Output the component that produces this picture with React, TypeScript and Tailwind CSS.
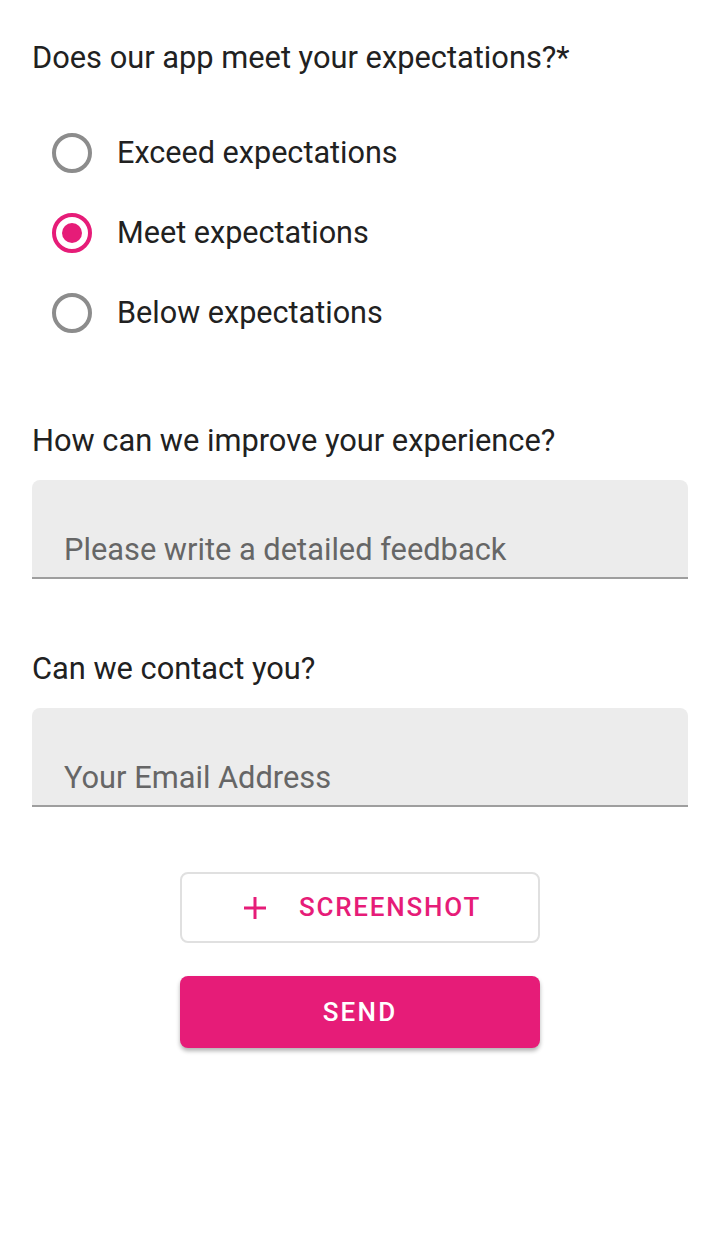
import React from "react";

const font = { fontFamily: "Roboto, 'Noto Sans', sans-serif" };

function Radio({ checked, label }: { checked?: boolean; label: string }) {
  return (
    <div className="flex items-center h-[80px] pl-[20px]">
      <div
        className={
          "w-[40px] h-[40px] rounded-full border-[4px] flex items-center justify-center " +
          (checked ? "border-[#e61c78]" : "border-[#8c8c8c]")
        }
      >
        {checked && <div className="w-[20px] h-[20px] rounded-full bg-[#e61c78]" />}
      </div>
      <span className="ml-[25px] text-[30.6px] text-[#212121]">{label}</span>
    </div>
  );
}

function Field({ placeholder }: { placeholder: string }) {
  return (
    <div className="h-[99px] bg-[#ececec] rounded-t-[8px] border-b-[2px] border-[#9e9e9e] flex items-end px-[32px] pb-[3px]">
      <span className="text-[30.8px] text-[#666666] leading-[48px]">{placeholder}</span>
    </div>
  );
}

export default function App() {
  return (
    <div className="w-[720px] h-[1248px] bg-white px-[32px] pt-[34px]" style={font}>
      <div className="text-[30.8px] text-[#212121] leading-[48px]">Does our app meet your expectations?*</div>
      <div className="mt-[31px]">
        <Radio label="Exceed expectations" />
        <Radio checked label="Meet expectations" />
        <Radio label="Below expectations" />
      </div>
      <div className="mt-[64px] text-[30.8px] text-[#212121] leading-[48px]">How can we improve your experience?</div>
      <div className="mt-[15px]">
        <Field placeholder="Please write a detailed feedback" />
      </div>
      <div className="mt-[66px] text-[30.8px] text-[#212121] leading-[48px]">Can we contact you?</div>
      <div className="mt-[15px]">
        <Field placeholder="Your Email Address" />
      </div>
      <div className="flex flex-col items-center mt-[65px] gap-[33px]">
        <button className="w-[360px] h-[71px] rounded-[8px] border-[2px] border-[#e0e0e0] bg-white flex items-center justify-center gap-[32px] text-[#e61c78] pl-[4px]">
          <svg width="24" height="24" viewBox="0 0 24 24">
            <path d="M12 1v22M1 12h22" stroke="#e61c78" strokeWidth="3" />
          </svg>
          <span className="text-[26px] font-medium tracking-[1.8px]">SCREENSHOT</span>
        </button>
        <button className="w-[360px] h-[72px] rounded-[8px] bg-[#e61c78] text-white shadow-[0_3px_4px_rgba(0,0,0,0.3)] flex items-center justify-center">
          <span className="text-[26px] font-medium tracking-[2.2px]">SEND</span>
        </button>
      </div>
    </div>
  );
}
